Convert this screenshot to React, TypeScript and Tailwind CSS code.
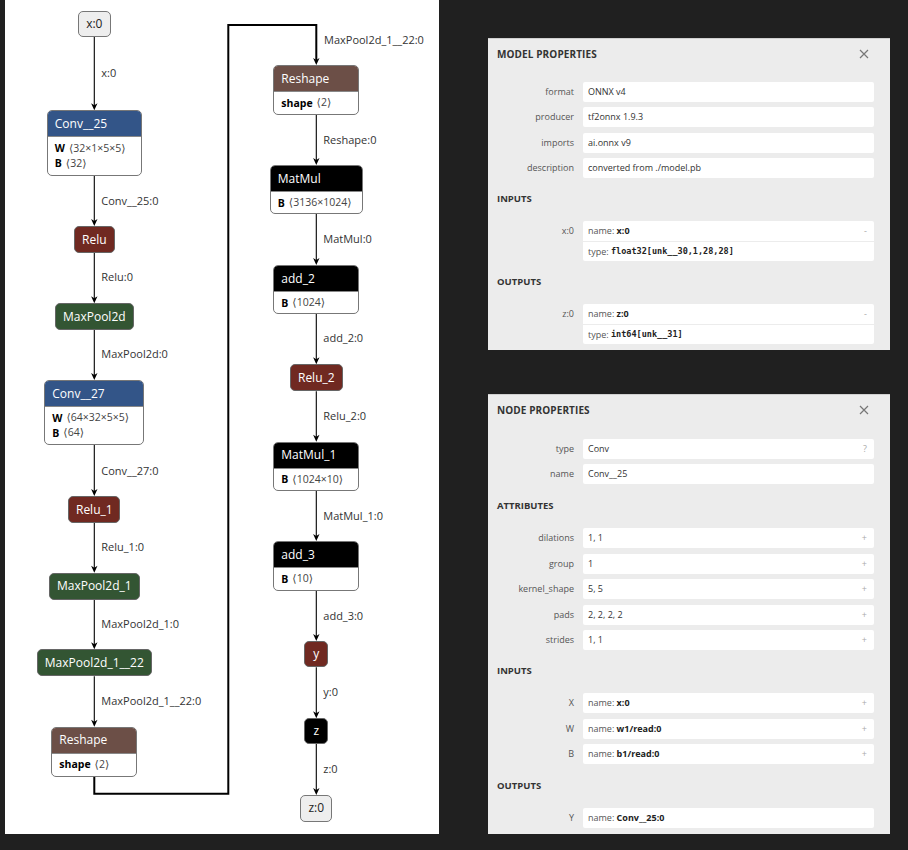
import React from "react";

type BodyLine = { k: string; v: string };
type NodeDef = {
  cx: number;
  top: number;
  w: number;
  h: number;
  title: string;
  color: string;
  kind: "simple" | "block" | "io";
  body?: BodyLine[];
};

const L = 89.3;
const R = 311.3;

const nodes: NodeDef[] = [
  { cx: L, top: 11, w: 33, h: 26, title: "x:0", color: "#eeeeee", kind: "io" },
  {
    cx: L, top: 110.3, w: 95, h: 66, title: "Conv__25", color: "#335588", kind: "block",
    body: [{ k: "W", v: "32×1×5×5" }, { k: "B", v: "32" }],
  },
  { cx: L, top: 226, w: 41, h: 27, title: "Relu", color: "#702921", kind: "simple" },
  { cx: L, top: 303.3, w: 79, h: 27, title: "MaxPool2d", color: "#335533", kind: "simple" },
  {
    cx: L, top: 380, w: 100, h: 65, title: "Conv__27", color: "#335588", kind: "block",
    body: [{ k: "W", v: "64×32×5×5" }, { k: "B", v: "64" }],
  },
  { cx: L, top: 496, w: 52, h: 27, title: "Relu_1", color: "#702921", kind: "simple" },
  { cx: L, top: 572.7, w: 91, h: 27, title: "MaxPool2d_1", color: "#335533", kind: "simple" },
  { cx: L, top: 649.3, w: 115, h: 27, title: "MaxPool2d_1__22", color: "#335533", kind: "simple" },
  {
    cx: L, top: 726.7, w: 86, h: 50, title: "Reshape", color: "#6c4f47", kind: "block",
    body: [{ k: "shape", v: "2" }],
  },
  {
    cx: R, top: 65, w: 86, h: 50, title: "Reshape", color: "#6c4f47", kind: "block",
    body: [{ k: "shape", v: "2" }],
  },
  {
    cx: R, top: 165, w: 93, h: 49, title: "MatMul", color: "#000000", kind: "block",
    body: [{ k: "B", v: "3136×1024" }],
  },
  {
    cx: R, top: 265, w: 86, h: 49, title: "add_2", color: "#000000", kind: "block",
    body: [{ k: "B", v: "1024" }],
  },
  { cx: R, top: 364.3, w: 53, h: 27, title: "Relu_2", color: "#702921", kind: "simple" },
  {
    cx: R, top: 441.7, w: 86, h: 49.3, title: "MatMul_1", color: "#000000", kind: "block",
    body: [{ k: "B", v: "1024×10" }],
  },
  {
    cx: R, top: 541, w: 86, h: 49.7, title: "add_3", color: "#000000", kind: "block",
    body: [{ k: "B", v: "10" }],
  },
  { cx: R, top: 641, w: 24, h: 26.3, title: "y", color: "#702921", kind: "simple" },
  { cx: R, top: 718.3, w: 24, h: 25.7, title: "z", color: "#000000", kind: "simple" },
  { cx: R, top: 795, w: 32, h: 26.7, title: "z:0", color: "#eeeeee", kind: "io" },
];

const edges: { x: number; y1: number; y2: number; label: string; ly: number }[] = [
  { x: L, y1: 37, y2: 110.3, label: "x:0", ly: 73 },
  { x: L, y1: 176, y2: 226, label: "Conv__25:0", ly: 201 },
  { x: L, y1: 253, y2: 303.3, label: "Relu:0", ly: 277.3 },
  { x: L, y1: 330, y2: 380, label: "MaxPool2d:0", ly: 354.3 },
  { x: L, y1: 445, y2: 496, label: "Conv__27:0", ly: 471 },
  { x: L, y1: 523, y2: 572.7, label: "Relu_1:0", ly: 547.3 },
  { x: L, y1: 599.7, y2: 649.3, label: "MaxPool2d_1:0", ly: 624 },
  { x: L, y1: 676.3, y2: 726.7, label: "MaxPool2d_1__22:0", ly: 701 },
  { x: R, y1: 115, y2: 165, label: "Reshape:0", ly: 140 },
  { x: R, y1: 214, y2: 265, label: "MatMul:0", ly: 239 },
  { x: R, y1: 314, y2: 364.3, label: "add_2:0", ly: 338.3 },
  { x: R, y1: 391.3, y2: 441.7, label: "Relu_2:0", ly: 416 },
  { x: R, y1: 491, y2: 541, label: "MatMul_1:0", ly: 515.7 },
  { x: R, y1: 590.7, y2: 641, label: "add_3:0", ly: 615.7 },
  { x: R, y1: 667.3, y2: 718.3, label: "y:0", ly: 692.3 },
  { x: R, y1: 744, y2: 795, label: "z:0", ly: 769 },
];

function arrow(x: number, y: number) {
  return `M ${x - 3.2} ${y - 7} L ${x} ${y} L ${x + 3.2} ${y - 7} L ${x} ${y - 5} Z`;
}

function GraphNode({ n }: { n: NodeDef }) {
  const style = { left: n.cx - n.w / 2, top: n.top, width: n.w, height: n.h };
  if (n.kind === "io") {
    return (
      <div
        className="absolute flex items-center justify-center rounded-[5px] border border-[#777] bg-[#eeeeee] text-[12px] text-[#222]"
        style={style}
      >
        {n.title}
      </div>
    );
  }
  if (n.kind === "simple") {
    return (
      <div
        className="absolute flex items-center justify-center rounded-[5px] border border-[#666] text-[12px] text-white"
        style={{ ...style, backgroundColor: n.color }}
      >
        {n.title}
      </div>
    );
  }
  return (
    <div
      className="absolute flex flex-col overflow-hidden rounded-[5px] border border-[#777] bg-white"
      style={style}
    >
      <div
        className="flex h-[26px] shrink-0 items-center border-b border-[#888] pl-[7px] text-[12px] text-white"
        style={{ backgroundColor: n.color }}
      >
        {n.title}
      </div>
      <div className="flex flex-col pl-[7px] pt-[4px]">
        {n.body!.map((b, i) => (
          <div key={i} className="flex h-[15px] items-center whitespace-nowrap text-[10.5px] text-[#222]">
            <span className="font-bold text-black">{b.k}</span>
            <span className="ml-[4px] text-[#444]">
              <span className="font-['DejaVu_Sans',sans-serif] text-[11px]">⟨</span>
              {b.v}
              <span className="font-['DejaVu_Sans',sans-serif] text-[11px]">⟩</span>
            </span>
          </div>
        ))}
      </div>
    </div>
  );
}

function Graph() {
  return (
    <div className="relative h-[834px] w-[434px] shrink-0 bg-white">
      <svg className="absolute left-0 top-0" width={434} height={834} viewBox="0 0 434 834">
        {edges.map((e, i) => (
          <g key={i}>
            <line x1={e.x} y1={e.y1} x2={e.x} y2={e.y2 - 4} stroke="#000" strokeWidth={1.1} />
            <path d={arrow(e.x, e.y2)} fill="#000" />
          </g>
        ))}
        <path
          d={`M ${L} 776.7 V 793.7 H 223.3 V 25 H ${R} V 61`}
          fill="none"
          stroke="#000"
          strokeWidth={2}
        />
        <path d={arrow(R, 65)} fill="#000" />
      </svg>
      {edges.map((e, i) => (
        <div
          key={i}
          className="absolute whitespace-nowrap text-[11px] leading-[14px] text-[#333]"
          style={{ left: e.x + 7, top: e.ly - 7 }}
        >
          {e.label}
        </div>
      ))}
      <div
        className="absolute whitespace-nowrap text-[11px] leading-[14px] text-[#333]"
        style={{ left: R + 7.7, top: 40 - 7 }}
      >
        MaxPool2d_1__22:0
      </div>
      {nodes.map((n, i) => (
        <GraphNode key={i} n={n} />
      ))}
    </div>
  );
}

function CloseIcon() {
  return (
    <svg width="10" height="10" viewBox="0 0 10 10">
      <path d="M1 1 L9 9 M9 1 L1 9" stroke="#777" strokeWidth="1.2" />
    </svg>
  );
}

function Title({ text }: { text: string }) {
  return (
    <div className="flex h-[12px] items-center justify-between pl-[9px] pr-[21px]">
      <span className="text-[10px] font-bold leading-[12px] tracking-[0.1px] text-[#333]">{text}</span>
      <CloseIcon />
    </div>
  );
}

function Section({ text, mt }: { text: string; mt: string }) {
  return (
    <div className={`${mt} mb-[16px] pl-[9px] text-[9.5px] font-bold leading-[12px] text-[#333]`}>
      {text}
    </div>
  );
}

function Row({
  label,
  children,
  icon,
  className,
}: {
  label: string;
  children: React.ReactNode;
  icon?: string;
  className?: string;
}) {
  return (
    <div className={`flex items-start ${className ?? ""}`}>
      <div className="w-[86px] shrink-0 text-right text-[9px] leading-[20px] text-[#555]">{label}</div>
      <div className="ml-[9px] flex h-[20px] w-[291px] items-center justify-between rounded-[2px] bg-white pl-[5px] pr-[7px] text-[9px] text-[#333]">
        <span>{children}</span>
        {icon && <span className="text-[9px] text-[#aaa]">{icon}</span>}
      </div>
    </div>
  );
}

function IORow({
  label,
  name,
  type,
  icon,
  className,
}: {
  label: string;
  name: string;
  type?: string;
  icon?: string;
  className?: string;
}) {
  return (
    <div className={`flex items-start ${className ?? ""}`}>
      <div className="w-[86px] shrink-0 text-right text-[9px] leading-[20px] text-[#555]">{label}</div>
      <div className="ml-[9px] flex w-[291px] flex-col rounded-[2px] bg-white text-[9px] text-[#333]">
        <div className="flex h-[20px] items-center justify-between pl-[5px] pr-[7px]">
          <span>
            <span className="text-[#555]">name: </span>
            <span className="font-bold text-[#222]">{name}</span>
          </span>
          {icon && <span className="text-[9px] text-[#aaa]">{icon}</span>}
        </div>
        {type && (
          <div className="flex h-[20px] items-center border-t border-[#ececec] pl-[5px]">
            <span className="text-[#555]">type:&nbsp;</span>
            <span className="font-['DejaVu_Sans_Mono',monospace] text-[8.5px] font-bold text-[#222]">{type}</span>
          </div>
        )}
      </div>
    </div>
  );
}

function ModelPanel() {
  return (
    <div className="flex h-[312px] w-[402px] flex-col border-t border-[#d0d0d0] bg-[#ececec] pt-[9px]">
      <Title text="MODEL PROPERTIES" />
      <div className="mt-[21.7px] flex flex-col gap-[5.5px]">
        <Row label="format">ONNX v4</Row>
        <Row label="producer">tf2onnx 1.9.3</Row>
        <Row label="imports">ai.onnx v9</Row>
        <Row label="description">converted from ./model.pb</Row>
      </div>
      <Section text="INPUTS" mt="mt-[15px]" />
      <IORow label="x:0" name="x:0" type="float32[unk__30,1,28,28]" icon="-" />
      <Section text="OUTPUTS" mt="mt-[15px]" />
      <IORow label="z:0" name="z:0" type="int64[unk__31]" icon="-" />
    </div>
  );
}

function NodePanel() {
  return (
    <div className="flex h-[440px] w-[402px] flex-col border-t border-[#d0d0d0] bg-[#ececec] pt-[9px]">
      <Title text="NODE PROPERTIES" />
      <div className="mt-[22.7px] flex flex-col gap-[5.5px]">
        <Row label="type" icon="?">Conv</Row>
        <Row label="name">Conv__25</Row>
      </div>
      <Section text="ATTRIBUTES" mt="mt-[16px]" />
      <div className="flex flex-col gap-[5.5px]">
        <Row label="dilations" icon="+">1, 1</Row>
        <Row label="group" icon="+">1</Row>
        <Row label="kernel_shape" icon="+">5, 5</Row>
        <Row label="pads" icon="+">2, 2, 2, 2</Row>
        <Row label="strides" icon="+">1, 1</Row>
      </div>
      <Section text="INPUTS" mt="mt-[15px]" />
      <div className="flex flex-col gap-[5.5px]">
        <IORow label="X" name="x:0" icon="+" />
        <IORow label="W" name="w1/read:0" icon="+" />
        <IORow label="B" name="b1/read:0" icon="+" />
      </div>
      <Section text="OUTPUTS" mt="mt-[16px]" />
      <IORow label="Y" name="Conv__25:0" />
    </div>
  );
}

export default function App() {
  return (
    <div className="flex h-[850px] w-[908px] bg-[#202020] pl-[5px] font-['Open_Sans','Noto_Sans',sans-serif]">
      <Graph />
      <div className="ml-[49px] flex flex-col pt-[38px]">
        <ModelPanel />
        <div className="mt-[44px]">
          <NodePanel />
        </div>
      </div>
    </div>
  );
}
